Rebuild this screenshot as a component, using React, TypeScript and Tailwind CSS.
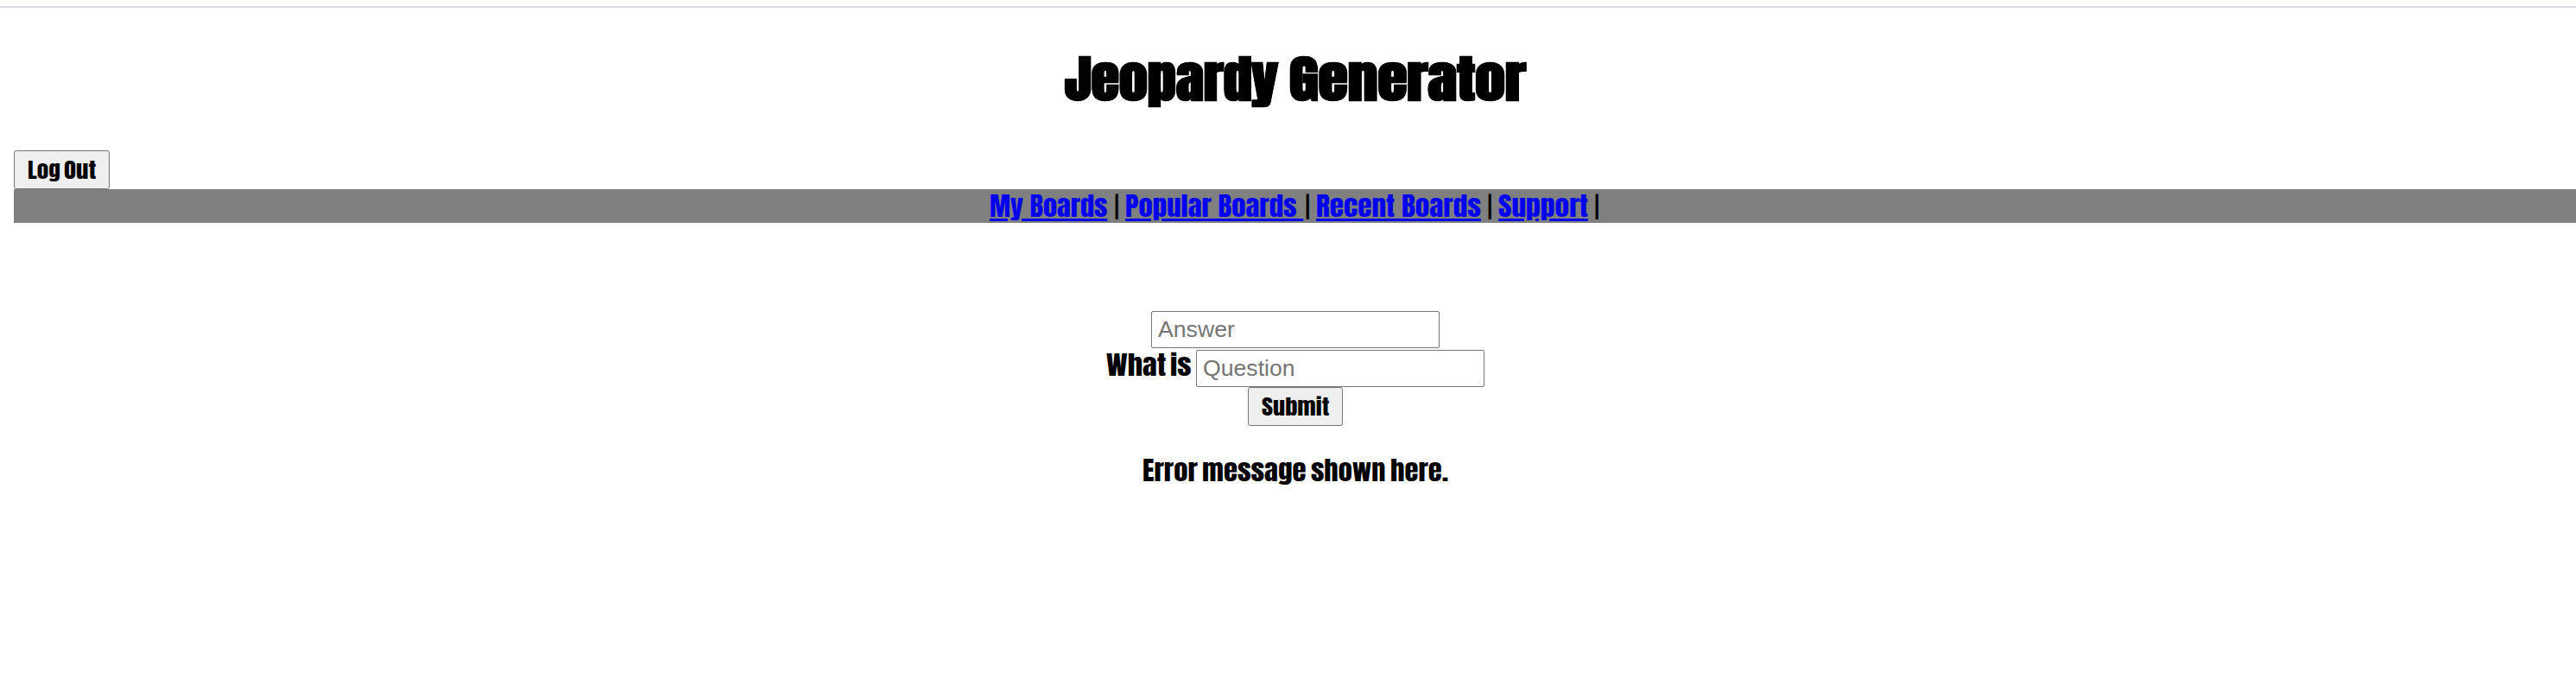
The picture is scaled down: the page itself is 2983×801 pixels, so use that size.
import { useLayoutEffect, useRef, useState } from "react";

type FitProps = { text: string; width: number; className?: string; inner?: string };

/* Condenses or widens a word so that it fills exactly the given width. */
function Fit({ text, width, className = "", inner = "" }: FitProps) {
  const ref = useRef<HTMLSpanElement>(null);
  const [scale, setScale] = useState(1);
  useLayoutEffect(() => {
    if (ref.current) setScale((width / ref.current.getBoundingClientRect().width) * scale);
  }, [text, width]);
  return (
    <span className={`block shrink-0 whitespace-pre text-left ${className}`} style={{ width }}>
      <span ref={ref} className={`inline-block origin-left ${inner}`} style={{ transform: `scaleX(${scale})` }}>
        {text}
      </span>
    </span>
  );
}

function NavLink({ text, width }: { text: string; width: number }) {
  return (
    <a href="#" className="block text-[#0000ee]">
      <Fit text={text} width={width} inner="underline decoration-[3px] underline-offset-[2px]" />
    </a>
  );
}

function Divider({ className }: { className: string }) {
  return <Fit text="|" width={4.4} className={`pt-[2px] ${className}`} />;
}

const field =
  "block h-[43px] w-[334px] rounded-[2px] border border-[#767676] bg-white px-[7px] font-['Liberation_Sans',Arial,sans-serif] text-[26.67px] placeholder:text-[#757575]";
const button =
  "flex h-[45px] rounded-[3px] border border-[#767676] bg-[#efefef] pl-[15px] pt-[4.5px] text-[24.5px]";

export default function App() {
  return (
    <div className="min-h-[801px] w-full overflow-hidden bg-white pt-[7px] font-[Impact,Anton,'Open_Sans',sans-serif] text-[29px] leading-[34px] text-black">
      <div className="h-[2px] bg-[#dadae2]" />
      <h1 className="flex h-[165px] gap-[12.7px] pl-[1233.3px] pt-[48.5px] text-[57.5px] leading-[68px] font-bold [-webkit-text-stroke:0.6px_black]">
        <Fit text="Jeopardy" width={247} />
        <Fit text="Generator" width={274} />
      </h1>
      <button className={`ml-[16px] w-[111px] gap-[4.5px] ${button}`}>
        <Fit text="Log" width={37.8} />
        <Fit text="Out" width={37.3} />
      </button>
      <nav className="ml-[16px] flex h-[39px] bg-[#808080] pl-[1130.3px] pt-[3px]">
        <NavLink text="My Boards" width={136.4} />
        <Divider className="ml-[8px] mr-[7.6px]" />
        <NavLink text="Popular Boards " width={206.3} />
        <Divider className="ml-[2.6px] mr-[8px]" />
        <NavLink text="Recent Boards" width={191} />
        <Divider className="mx-[7.8px]" />
        <NavLink text="Support" width={104} />
        <Divider className="ml-[8.2px]" />
      </nav>
      <form className="pt-[102px]" onSubmit={(e) => e.preventDefault()}>
        <input placeholder="Answer" className={`ml-[1333px] ${field}`} />
        <div className="flex pl-[1280.7px] pt-[2px]">
          <Fit text="What" width={69.4} className="pt-px" />
          <Fit text="is" width={24.5} className="ml-[4.9px] mr-[5.5px] pt-px" />
          <input placeholder="Question" className={field} />
        </div>
        <button className={`ml-[1445px] w-[110px] ${button}`}>
          <Fit text="Submit" width={78.3} />
        </button>
      </form>
      <p className="flex gap-[5.4px] pl-[1323.1px] pt-[35px]">
        <Fit text="Error" width={63.8} />
        <Fit text="message" width={120.6} />
        <Fit text="shown" width={86.5} />
        <Fit text="here." width={67.3} />
      </p>
    </div>
  );
}
